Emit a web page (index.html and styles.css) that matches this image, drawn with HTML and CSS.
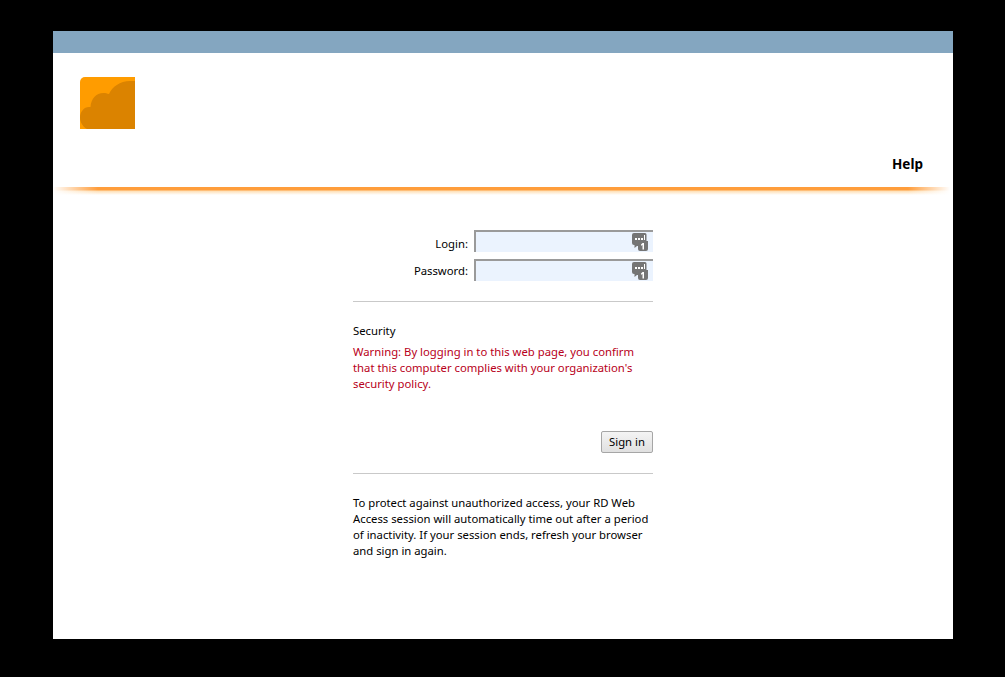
FILE: index.html
```html
<!DOCTYPE html>
<html lang="en">
<head>
<meta charset="utf-8">
<title>RD Web Access</title>
<link rel="stylesheet" href="styles.css">
</head>
<body>
<main class="window">
  <div class="topbar"></div>
  <header class="header">
    <svg class="logo" width="55" height="52" viewBox="0 0 55 52" aria-hidden="true">
      <path d="M5 0H55V52H0V5A5 5 0 0 1 5 0Z" fill="#ff9c00"/>
      <path d="M55 4H50C40 4 32 10 29 17C27 16.500 25.500 16 23.500 16C16 16 11 22 10.500 30C10 30 9.500 30 9 30C4 30 0 35 0 40.500C0 46 3.500 50 7 52H55Z" fill="#db8300"/>
    </svg>
    <nav class="nav"><a class="help">Help</a></nav>
  </header>
  <div class="rule"></div>
  <section class="content">
    <form class="login">
      <div class="field">
        <label class="field-label field-label-login">Login:</label>
        <div class="input">
          <svg class="key" width="16" height="18" viewBox="0 0 16 18" aria-hidden="true"><path d="M2 0H13A1.500 1.500 0 0 1 14.500 1.500V8H16V16A2 2 0 0 1 14 18H8A2 2 0 0 1 6 16V13H5L2.500 15V12H2A2 2 0 0 1 0 10V2A2 2 0 0 1 2 0Z" fill="#757575"/><path d="M3 5h2v2H3zM6 5h2v2H6zM9 5h2v2H9zM12 2h1v5h-1z" fill="#fff"/><path d="M10.500 10H12V16.500H10.500V12L9 12.800V11.500Z" fill="#fff"/></svg>
        </div>
      </div>
      <div class="field">
        <label class="field-label field-label-password">Password:</label>
        <div class="input">
          <svg class="key" width="16" height="18" viewBox="0 0 16 18" aria-hidden="true"><path d="M2 0H13A1.500 1.500 0 0 1 14.500 1.500V8H16V16A2 2 0 0 1 14 18H8A2 2 0 0 1 6 16V13H5L2.500 15V12H2A2 2 0 0 1 0 10V2A2 2 0 0 1 2 0Z" fill="#757575"/><path d="M3 5h2v2H3zM6 5h2v2H6zM9 5h2v2H9zM12 2h1v5h-1z" fill="#fff"/><path d="M10.500 10H12V16.500H10.500V12L9 12.800V11.500Z" fill="#fff"/></svg>
        </div>
      </div>
      <hr class="divider divider-first">
      <h2 class="security">Security</h2>
      <p class="warning">Warning: By logging in to this web page, you confirm that this computer complies with your organization's security policy.</p>
      <div class="actions"><button class="signin" type="button">Sign in</button></div>
      <hr class="divider divider-second">
      <p class="note">To protect against unauthorized access, your RD Web Access session will automatically time out after a period of inactivity. If your session ends, refresh your browser and sign in again.</p>
    </form>
  </section>
</main>
</body>
</html>
```
FILE: styles.css
```css
* { box-sizing: border-box; }
html, body { height: 100%; }
body {
  margin: 0;
  padding: 31px 52px 38px 53px;
  background: #000;
  font-family: "Noto Sans", sans-serif;
  font-size: 11.3px;
  line-height: 16px;
  color: #000;
  overflow: hidden;
}
.window { height: 608px; background: #fff; }
.topbar { height: 22px; background: #84a6c0; }
.header { height: 134px; padding: 24px 30px 0 27px; display: flex; flex-direction: column; }
.logo { display: block; flex: none; }
.nav { display: flex; justify-content: flex-end; margin-top: 27px; }
.help { font-size: 13.5px; font-weight: 700; line-height: 16px; }
.rule {
  height: 8px;
  background:
    linear-gradient(90deg, #fff 0, rgba(255,255,255,0) 45px, rgba(255,255,255,0) 855px, #fff 897px),
    linear-gradient(180deg, #ff9d3b 0, #ff9d3b 3px, #fedfb5 4px, #fff 8px);
}
.content { display: flex; justify-content: center; padding-top: 35px; }
.login { width: 300px; }
.field { display: flex; justify-content: flex-end; align-items: center; gap: 6px; height: 22px; margin-bottom: 7px; }
.field-label { text-align: right; }
.field-label-login { padding-top: 6px; }
.field-label-password { padding-top: 2px; }
.input {
  position: relative;
  width: 179px;
  height: 22px;
  background: #ebf3fe;
  border-top: 2px solid #9a9a9a;
  border-left: 2px solid #9a9a9a;
}
.key { position: absolute; top: 1px; right: 5px; }
.divider { border: 0; border-top: 1px solid #c9c9c9; margin: 0; }
.divider-first { margin-top: 20px; }
.security { font-size: inherit; font-weight: 400; margin: 21px 0 0; line-height: 16px; }
.warning { margin: 5px 0 0; color: #b80020; }
.actions { display: flex; justify-content: flex-end; margin-top: 39px; }
.signin {
  width: 52px;
  height: 22px;
  padding: 0;
  font: inherit;
  color: #000;
  background: linear-gradient(180deg, #f4f4f4, #e0e0e0);
  border: 1px solid #a6a6a6;
  border-radius: 2px;
}
.divider-second { margin-top: 20px; }
.note { margin: 21px 0 0; }
```
